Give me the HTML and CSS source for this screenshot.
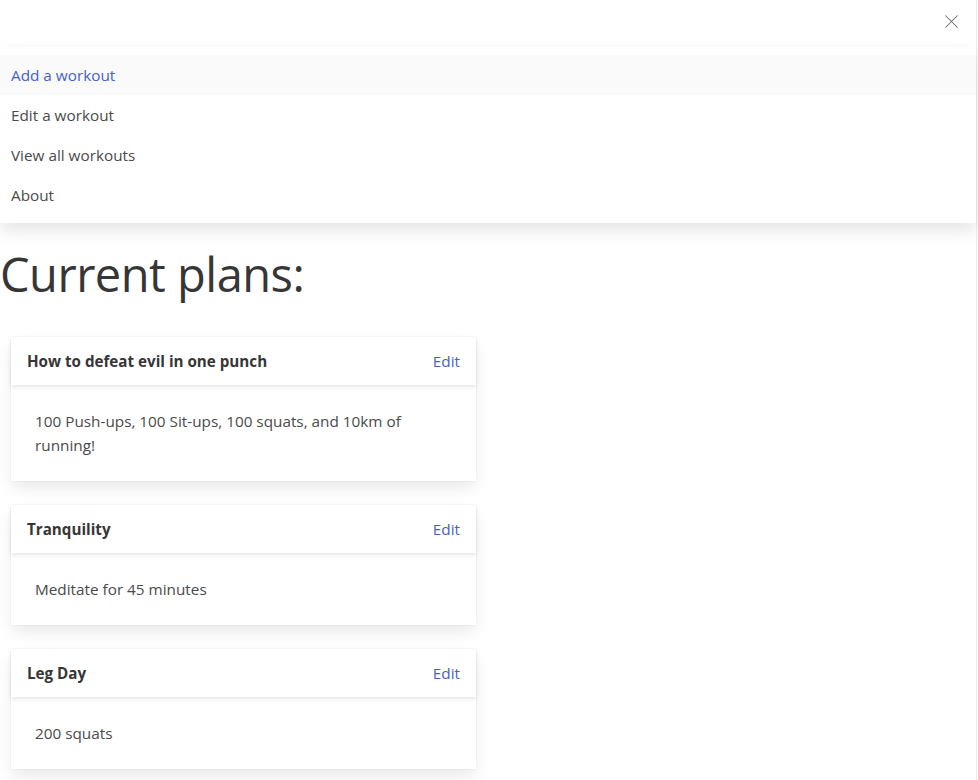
FILE: index.html
```html
<!DOCTYPE html>
<html>
<head>
<meta charset="utf-8">
<link rel="stylesheet" href="styles.css">
</head>
<body>
<div class="page">
  <nav class="navbar">
    <div class="navbar-brand">
      <a class="burger" aria-label="close menu">
        <span class="bar bar-a"></span>
        <span class="bar bar-b"></span>
      </a>
    </div>
    <div class="navbar-menu">
      <a class="navbar-item is-active">Add a workout</a>
      <a class="navbar-item">Edit a workout</a>
      <a class="navbar-item">View all workouts</a>
      <a class="navbar-item">About</a>
    </div>
  </nav>
  <h1 class="title">Current plans:</h1>
  <div class="plans">
    <div class="card">
      <header class="card-header">
        <p class="card-header-title">How to defeat evil in one punch</p>
        <a class="card-header-link">Edit</a>
      </header>
      <div class="card-content">100 Push-ups, 100 Sit-ups, 100 squats, and 10km of running!</div>
    </div>
    <div class="card">
      <header class="card-header">
        <p class="card-header-title">Tranquility</p>
        <a class="card-header-link">Edit</a>
      </header>
      <div class="card-content">Meditate for 45 minutes</div>
    </div>
    <div class="card">
      <header class="card-header">
        <p class="card-header-title">Leg Day</p>
        <a class="card-header-link">Edit</a>
      </header>
      <div class="card-content">200 squats</div>
    </div>
  </div>
</div>
</body>
</html>
```

FILE: styles.css
```css
* { box-sizing: border-box; }
html, body {
  margin: 0;
  padding: 0;
  background: #fff;
}
body {
  font-family: "Open Sans", "Noto Sans", sans-serif;
  font-size: 16px;
  line-height: 1.5;
  color: #4a4a4a;
  overflow: hidden;
}
.page {
  width: 977px;
  min-height: 780px;
  border-right: 1px solid #ececec;
}
.navbar {
  position: relative;
  z-index: 2;
}
.navbar-brand {
  height: 47px;
  display: flex;
  justify-content: flex-end;
}
.burger {
  position: relative;
  width: 52px;
  height: 42px;
  display: block;
}
.bar {
  position: absolute;
  left: 19px;
  top: 21px;
  width: 17px;
  height: 1px;
  background: #6a6a6a;
}
.bar-a { transform: rotate(45deg); }
.bar-b { transform: rotate(-45deg); }
.navbar-menu {
  padding: 8px 0;
  background: #fff;
  box-shadow: 0 8px 16px rgba(10, 10, 10, 0.1);
  display: flex;
  flex-direction: column;
}
.navbar-item {
  display: block;
  padding: 8px 11px;
  line-height: 24px;
  color: #4a4a4a;
  font-size: 15.3px;
}
.navbar-item.is-active {
  background: #fafafa;
  color: #485fc7;
}
.title {
  margin: 24px 0 0;
  font-size: 47px;
  font-weight: 400;
  line-height: 54px;
  color: #363636;
  letter-spacing: -0.5px;
}
.plans {
  padding: 36px 0 0 11px;
  display: flex;
  flex-direction: column;
  gap: 24px;
}
.card {
  width: 465px;
  background: #fff;
  box-shadow: 0 8px 16px -2px rgba(10, 10, 10, 0.1), 0 0 0 1px rgba(10, 10, 10, 0.02);
}
.card-header {
  display: flex;
  align-items: center;
  box-shadow: 0 2px 4px rgba(10, 10, 10, 0.1);
}
.card-header-title {
  flex: 1;
  margin: 0;
  padding: 12px 16px;
  font-weight: 700;
  color: #363636;
  font-size: 15.2px;
  line-height: 24px;
}
.card-header-link {
  padding: 12px 16px;
  color: #485fc7;
  font-size: 15.3px;
  line-height: 24px;
}
.card-content {
  padding: 24px;
  font-size: 15.3px;
  line-height: 24px;
}
```
